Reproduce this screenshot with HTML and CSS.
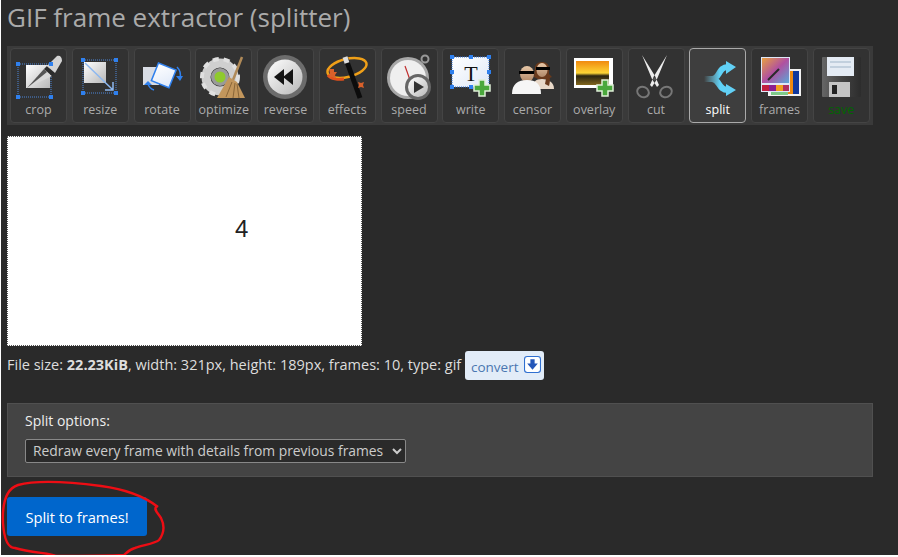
FILE: index.html
```html
<!DOCTYPE html>
<html lang="en">
<head>
  <meta charset="UTF-8">
  <meta name="viewport" content="width=device-width, initial-scale=1.0">
  <title>GIF frame extractor (splitter)</title>
  <link rel="stylesheet" href="styles.css">
</head>
<body>
  <svg class="defs" aria-hidden="true">
    <defs>
      <linearGradient id="silver" x1="0" y1="0" x2="1" y2="1"><stop offset="0" stop-color="#fff"/><stop offset="1" stop-color="#b8b8b8"/></linearGradient>
      <linearGradient id="paper" x1="0" y1="0" x2="1" y2="1"><stop offset="0" stop-color="#fff"/><stop offset="1" stop-color="#dfe8f8"/></linearGradient>
      <linearGradient id="sunset" x1="0" y1="0" x2="0" y2="1"><stop offset="0" stop-color="#f08a10"/><stop offset=".5" stop-color="#fdd535"/><stop offset=".62" stop-color="#2a2410"/><stop offset="1" stop-color="#80651c"/></linearGradient>
      <linearGradient id="fade" gradientUnits="userSpaceOnUse" x1="14" y1="0" x2="30" y2="0"><stop offset="0" stop-color="#7fdcf9" stop-opacity="0"/><stop offset="1" stop-color="#5fd2f7"/></linearGradient>
      <linearGradient id="balloon" x1="0" y1="0" x2="1" y2="1"><stop offset="0" stop-color="#e8a040"/><stop offset=".5" stop-color="#b050a0"/><stop offset="1" stop-color="#5aa8d8"/></linearGradient>
      <linearGradient id="skin" x1="0" y1="0" x2="0" y2="1"><stop offset="0" stop-color="#e8c8a8"/><stop offset="1" stop-color="#b08868"/></linearGradient>
      <linearGradient id="disk" x1="0" y1="0" x2="1" y2="0"><stop offset="0" stop-color="#666"/><stop offset=".5" stop-color="#444"/><stop offset="1" stop-color="#2c2c2c"/></linearGradient>
      <g id="plus">
        <path d="M-3-8h6v5h5v6h-5v5h-6v-5h-5v-6h5z" fill="#4aa83c" stroke="#dff0d8" stroke-width="1.5"/>
      </g>
    </defs>
  </svg>

  <div class="page">
    <h1>GIF frame extractor (splitter)</h1>

    <nav class="toolbar">
      <a class="tool">
        <svg viewBox="0 0 56 52">
          <rect x="7" y="15" width="33" height="33" fill="none" stroke="#4d86d8" stroke-dasharray="1 1"/>
          <rect x="15" y="16" width="24" height="23" fill="url(#silver)"/>
          <path d="M16 39 33 20 41 27z" fill="#d8d8d8"/>
          <path d="M16 39 33 20 36 23z" fill="#555"/>
          <path d="M33 20 36 17 44 24 41 27z" fill="#2c2c2c"/>
          <path d="M36 17 46 7c3-1 5 1 5 5L44 24z" fill="#d4d4d4"/>
          <g fill="#2f80ee"><rect x="5" y="13" width="4" height="4"/><rect x="38" y="13" width="4" height="4"/><rect x="5" y="46" width="4" height="4"/><rect x="38" y="46" width="4" height="4"/></g>
        </svg>
        <span>crop</span>
      </a>
      <a class="tool">
        <svg viewBox="0 0 56 52">
          <rect x="11" y="11" width="33" height="33" fill="none" stroke="#4d86d8" stroke-dasharray="1 1"/>
          <rect x="12" y="13" width="22" height="21" fill="url(#silver)"/>
          <path d="M13 14 41 41M41 33v8h-8" fill="none" stroke="#8db8f0" stroke-width="1.5"/>
          <g fill="#2f80ee"><rect x="9" y="9" width="4" height="4"/><rect x="42" y="9" width="4" height="4"/><rect x="9" y="42" width="4" height="4"/><rect x="42" y="42" width="4" height="4"/></g>
        </svg>
        <span>resize</span>
      </a>
      <a class="tool">
        <svg viewBox="0 0 56 52">
          <rect x="9" y="18" width="16" height="18" fill="#d8dce4"/>
          <rect x="20" y="17" width="19" height="19" transform="rotate(22 30 27)" fill="url(#paper)" stroke="#2f80ee" stroke-width="1.5"/>
          <path d="M14 35c1 3 3 5 6 6M43 18c3 3 4 7 3 11" fill="none" stroke="#2f80ee" stroke-width="1.5"/>
          <path d="M10 36h8l-4-4zM42 27h7l-3 5z" fill="#2f80ee"/>
        </svg>
        <span>rotate</span>
      </a>
      <a class="tool">
        <svg viewBox="0 0 56 52">
          <circle cx="24" cy="28" r="14" fill="none" stroke="#cfcfcf" stroke-width="9"/>
          <circle cx="24" cy="28" r="18" fill="none" stroke="#e0e0e0" stroke-width="4" stroke-dasharray="6 5"/>
          <circle cx="24" cy="28" r="9" fill="#9a9a9a"/>
          <circle cx="24" cy="28" r="5.5" fill="#8fca2c"/>
          <path d="M46 8 37 31" stroke="#b08a58" stroke-width="2.5"/>
          <path d="M33 28 41 33 49 49H21z" fill="#c2965c"/>
          <path d="M30 48 36 33M37 49 39 34M43 49 41 35" stroke="#8a6638"/>
        </svg>
        <span>optimize</span>
      </a>
      <a class="tool">
        <svg viewBox="0 0 56 52">
          <circle cx="27" cy="28" r="22" fill="#6c6c6c"/>
          <circle cx="27" cy="28" r="17.5" fill="url(#silver)"/>
          <path d="M16 28 26 20v16zM25 28 35 20v16z" fill="#141414"/>
        </svg>
        <span>reverse</span>
      </a>
      <a class="tool">
        <svg viewBox="0 0 56 52">
          <ellipse cx="28" cy="19" rx="20" ry="9" transform="rotate(-14 28 19)" fill="none" stroke="#f0a018" stroke-width="2.5"/>
          <path d="M9 26c3 4 10 5 16 4" fill="none" stroke="#e0501c" stroke-width="3"/>
          <path d="M27 10 41 49" stroke="#0c0c0c" stroke-width="5"/>
          <path d="M26 8 28 14" stroke="#ddd" stroke-width="5"/>
          <path d="M10 20h5v3h3l-2 3 1 3-4-1-3 1 1-4zM39 33l3 1 3-1-1 3 1 3-3-1-3 1 1-3z" fill="#d8602a"/>
        </svg>
        <span>effects</span>
      </a>
      <a class="tool">
        <svg viewBox="0 0 56 52">
          <circle cx="44" cy="10" r="3.5" fill="none" stroke="#999" stroke-width="2"/>
          <circle cx="27" cy="29" r="21" fill="#a8a8a8"/>
          <circle cx="27" cy="29" r="18" fill="#efefef"/>
          <path d="M24 17 29 31" stroke="#c03030" stroke-width="1.2"/>
          <circle cx="37" cy="38" r="13" fill="#666"/>
          <circle cx="37" cy="38" r="10" fill="url(#silver)"/>
          <path d="M33 32 43 38 33 44z" fill="#333"/>
        </svg>
        <span>speed</span>
      </a>
      <a class="tool">
        <svg viewBox="0 0 56 52">
          <rect x="9" y="8" width="37" height="30" fill="url(#paper)" stroke="#2f6fd0" stroke-dasharray="1 1"/>
          <text x="28" y="32" class="icon-t">T</text>
          <g fill="#2f80ee"><rect x="7" y="6" width="4" height="4"/><rect x="26" y="6" width="4" height="4"/><rect x="44" y="6" width="4" height="4"/><rect x="7" y="21" width="4" height="4"/><rect x="44" y="21" width="4" height="4"/><rect x="7" y="36" width="4" height="4"/><rect x="26" y="36" width="4" height="4"/></g>
          <use href="#plus" x="39" y="39"/>
        </svg>
        <span>write</span>
      </a>
      <a class="tool">
        <svg viewBox="0 0 56 52">
          <path d="M30 19c0-8 14-8 14 0v6l3 3-5 2h-9l-4-2z" fill="#6a3a1c"/>
          <ellipse cx="37" cy="21" rx="5.5" ry="7" fill="url(#skin)"/>
          <path d="M27 40c0-7 4-10 10-10s12 3 12 10z" fill="#e8d8c8"/>
          <path d="M42 24c4 4 3 9 2 13l-4-2z" fill="#6a3a1c"/>
          <ellipse cx="22" cy="25" rx="7" ry="8" fill="url(#skin)"/>
          <path d="M7 45c0-10 6-14 15-14s14 4 14 14z" fill="#f6f6f6"/>
          <rect x="14" y="22" width="15" height="3" fill="#000"/>
          <rect x="31" y="18" width="14" height="3" fill="#000"/>
        </svg>
        <span>censor</span>
      </a>
      <a class="tool">
        <svg viewBox="0 0 56 52">
          <rect x="8" y="9" width="39" height="30" fill="#fff"/>
          <rect x="10" y="12" width="33" height="24" fill="url(#sunset)"/>
          <use href="#plus" x="39" y="39"/>
        </svg>
        <span>overlay</span>
      </a>
      <a class="tool">
        <svg viewBox="0 0 56 52">
          <path d="M14 6 24 30 29 38 31 36 27 27zM39 6 29 30 24 38 22 36 26 27z" fill="#ececec"/>
          <ellipse cx="15" cy="43" rx="6" ry="5" fill="none" stroke="#777" stroke-width="2" transform="rotate(25 15 43)"/>
          <ellipse cx="38" cy="43" rx="6" ry="5" fill="none" stroke="#777" stroke-width="2" transform="rotate(-25 38 43)"/>
          <circle cx="26.500" cy="30" r="1.500" fill="#555"/>
        </svg>
        <span>cut</span>
      </a>
      <a class="tool active">
        <svg viewBox="0 0 56 52">
          <path d="M14 30H22C30 30 28 18 38 18M14 30H22C30 30 28 41 38 41" fill="none" stroke="url(#fade)" stroke-width="6"/>
          <path d="M36 12 46 18 36 25zM36 35 46 41 36 47z" fill="#62d0f5"/>
        </svg>
        <span>split</span>
      </a>
      <a class="tool">
        <svg viewBox="0 0 56 52">
          <rect x="16" y="20" width="33" height="27" fill="#f2f2f2"/>
          <rect x="36" y="22" width="5" height="23" fill="#ee8a10"/>
          <rect x="41" y="22" width="6" height="23" fill="#10389c"/>
          <rect x="19" y="42" width="17" height="4" fill="#7ecb8a"/>
          <rect x="9" y="8" width="29" height="35" fill="#dfe8f8"/>
          <rect x="10" y="9" width="27" height="25" fill="url(#balloon)"/>
          <path d="M16 31 27 20" stroke="#2a2a2a" stroke-width="2"/>
          <rect x="10" y="36" width="7" height="6" fill="#c02040"/>
          <rect x="17" y="36" width="7" height="6" fill="#8a2090"/>
          <rect x="24" y="36" width="7" height="6" fill="#f0a020"/>
          <rect x="31" y="36" width="6" height="6" fill="#b03060"/>
        </svg>
        <span>frames</span>
      </a>
      <a class="tool save">
        <svg viewBox="0 0 56 52">
          <rect x="9" y="8" width="39" height="40" rx="1" fill="url(#disk)"/>
          <rect x="14" y="8" width="27" height="19" fill="#e4ebf4"/>
          <path d="M17 13h21M17 18h21" stroke="#9fb4c8"/>
          <rect x="16" y="33" width="21" height="15" fill="#c4c4c4"/>
          <rect x="19" y="36" width="5" height="9" fill="#222"/>
        </svg>
        <span>save</span>
      </a>
    </nav>

    <div class="preview">
      <span class="frame-number">4</span>
    </div>

    <div class="info">
      <p>File size: <b>22.23KiB</b>, width: 321px, height: 189px, frames: 10, type: gif</p>
      <a class="convert">convert
        <svg viewBox="0 0 16 16"><rect x=".5" y=".5" width="15" height="15" rx="2.5" fill="#fff" stroke="#2f6fd0"/><path d="M6 3h4v4h3l-5 6-5-6h3z" fill="#2456b8"/></svg>
      </a>
    </div>

    <form class="options">
      <label for="split-mode">Split options:</label>
      <select id="split-mode">
        <option>Redraw every frame with details from previous frames</option>
      </select>
    </form>

    <button class="primary" type="button">Split to frames!</button>

    <svg class="scribble" viewBox="0 0 170 80" aria-hidden="true">
      <path d="M157 27C148 20 130 10 100 6 70 2 35 0 17 5 5 9 1 22 2 43 3 58 6 68 14 68 30 73 50 73 55 76 80 76 105 76 123 75 127 71 130 69 134 68 143 65 155 63 158 60 164 52 163 44 160 38 156 32 153 30 155 27" fill="none" stroke="#ee0d14" stroke-width="2.4"/>
    </svg>
  </div>
</body>
</html>
```

FILE: styles.css
```css
/* General Styling */
body {
  font-family: "Open Sans", sans-serif;
  background: #fff;
  color: #ddd;
  margin: 0;
  padding: 0;
}

.defs {
  position: absolute;
  width: 0;
  height: 0;
}

.page {
  position: relative;
  width: 891px;
  height: 555px;
  margin-left: 1px;
  padding: 0 0 0 6px;
  background: #2a2a2a;
  overflow: visible;
}

h1 {
  margin: 0;
  padding-top: 2px;
  font-size: 26px;
  line-height: 30px;
  font-weight: 400;
  color: #aaa;
}

.toolbar {
  display: flex;
  gap: 4.75px;
  width: 860px;
  height: 75px;
  margin-top: 14px;
  padding: 2px 3px;
  background: #3a3a3a;
}

.tool {
  display: flex;
  flex-direction: column;
  align-items: center;
  flex: none;
  width: 57px;
  height: 75px;
  box-sizing: border-box;
  border: 1px solid #444;
  border-radius: 4px;
  background: #323232;
  color: #aaa;
  font-size: 12.5px;
  line-height: 16px;
}

.tool svg {
  display: block;
  flex: none;
  width: 56px;
  height: 52px;
}

.tool span {
  margin-top: 1px;
}

.tool.active {
  background: #3e3e3e;
  border-color: #aaa;
  color: #fff;
  font-weight: 500;
}

.tool.save {
  color: #060;
}

.icon-t {
  font-family: "Liberation Serif", serif;
  font-size: 22px;
  text-anchor: middle;
  fill: #111;
}

.preview {
  position: relative;
  width: 353px;
  height: 208px;
  margin-top: 11px;
  border: 1px dotted #555;
  background: #fff;
}

.frame-number {
  position: absolute;
  left: 227px;
  top: 76px;
  font-family: "Liberation Sans", sans-serif;
  font-size: 24px;
  line-height: 32px;
  color: #222;
}

.info {
  display: flex;
  align-items: flex-start;
  height: 29px;
  margin-top: 5px;
  font-size: 14.5px;
  line-height: 28px;
}

.info p {
  width: 458px;
  margin: 0;
  white-space: nowrap;
}

.convert {
  display: flex;
  align-items: center;
  gap: 5px;
  box-sizing: border-box;
  width: 79px;
  height: 29px;
  padding: 2px 6px 0;
  border-radius: 3px;
  background: #e2ecf8;
  color: #4a76b0;
  font-size: 13.5px;
}

.convert svg {
  flex: none;
  width: 17px;
  height: 17px;
  margin-top: -4px;
}

.options {
  width: 830px;
  height: 72px;
  margin-top: 23px;
  padding: 0 17px;
  border: 1px solid #505050;
  background: #444;
}

.options label {
  display: block;
  margin-top: 7px;
  font-size: 14px;
  line-height: 20px;
  color: #eee;
}

.options select {
  display: block;
  width: 381px;
  height: 24px;
  margin-top: 8px;
  padding: 0 3px 2px;
  border: 1px solid #888;
  border-radius: 2px;
  background: #2a2a2a;
  color: #ccc;
  font-family: inherit;
  font-size: 13.85px;
}

.primary {
  display: block;
  width: 140px;
  height: 39px;
  margin-top: 20px;
  border: none;
  border-radius: 3px;
  background: #0066cc;
  color: #fff;
  font-family: inherit;
  font-size: 14.7px;
}

/* hand drawn marker ring over the button */
.scribble {
  position: absolute;
  left: 0;
  top: 480px;
  width: 170px;
  height: 80px;
  overflow: visible;
}
```
